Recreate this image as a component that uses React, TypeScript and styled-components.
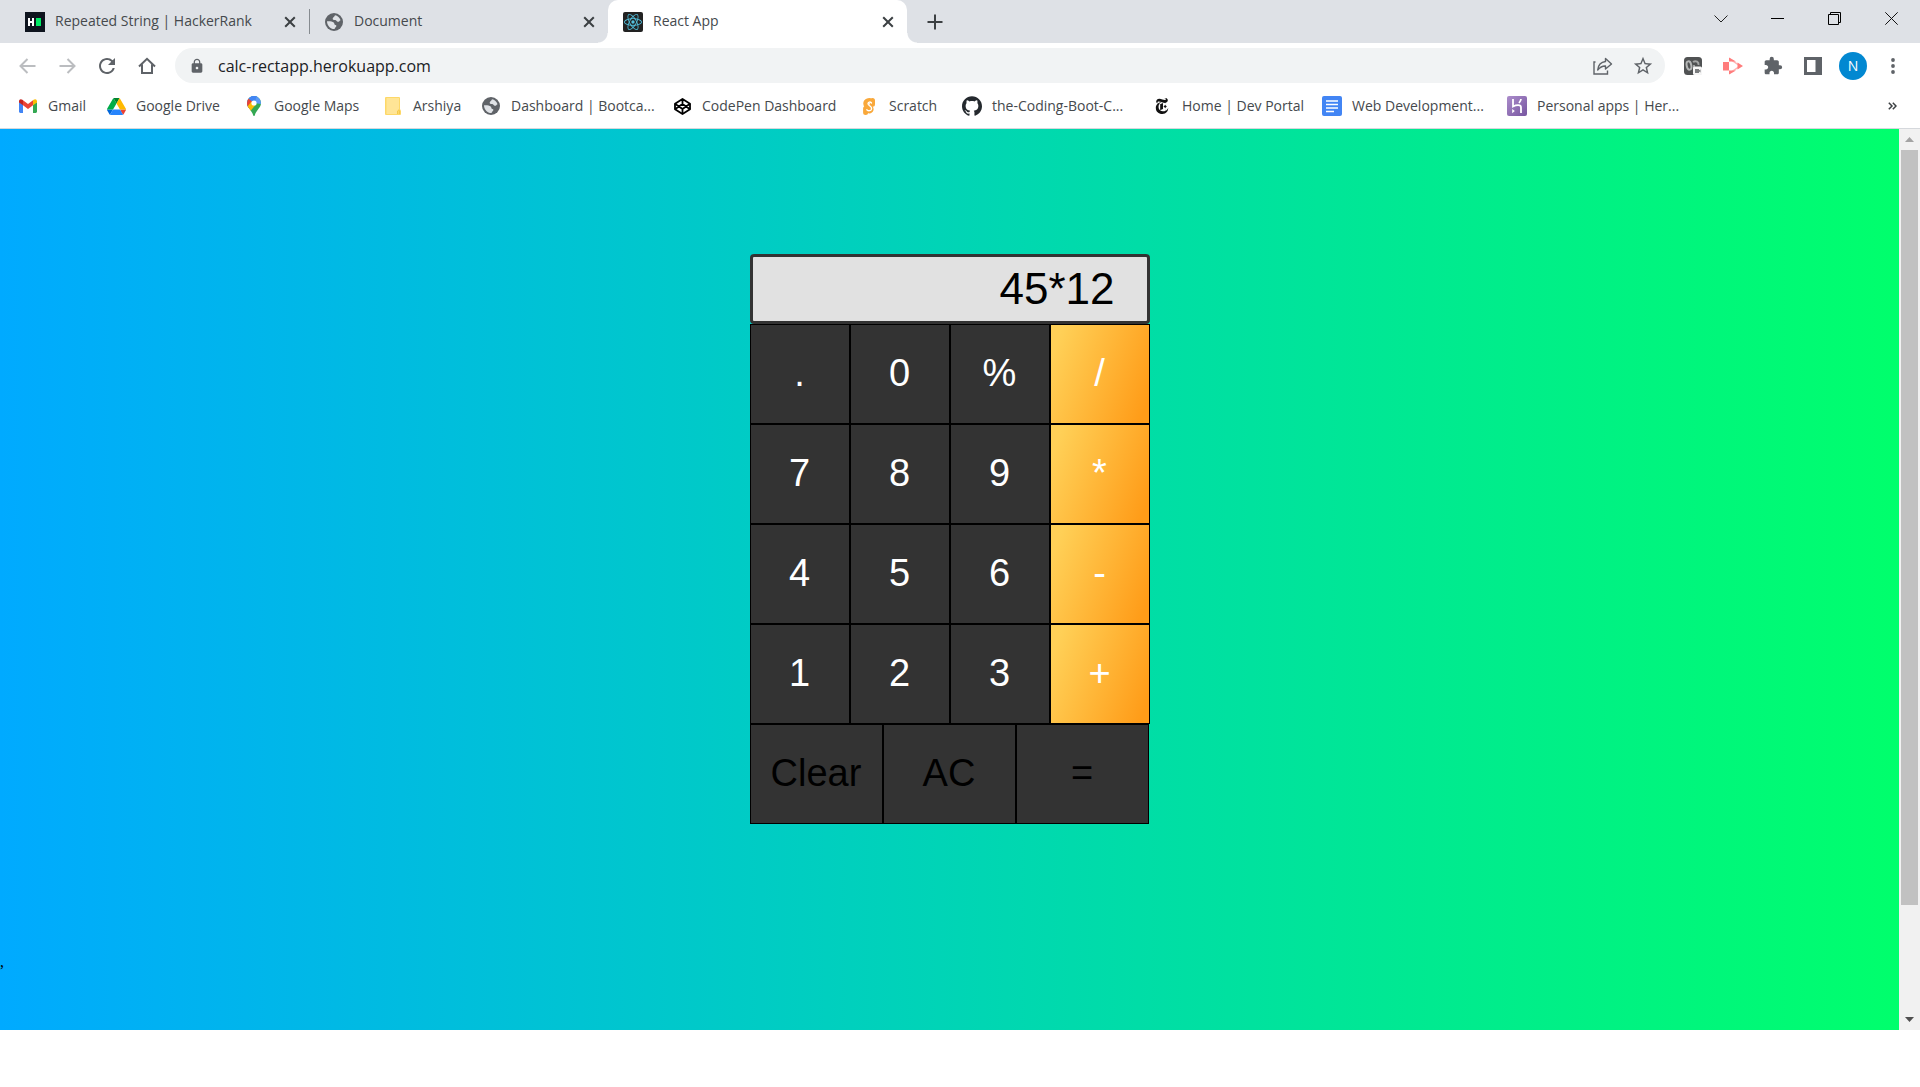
import React, { useState } from "react";
import styled, { createGlobalStyle, css } from "styled-components";
import { MdExtension, MdLock, MdStarBorder, MdRefresh } from "react-icons/md";
import { SiGithub, SiNewyorktimes, SiReact } from "react-icons/si";

const UI_FONT = '"Open Sans", "Noto Sans", sans-serif';
const KEY_FONT = '"Liberation Sans", Arial, sans-serif';

const GlobalStyle = createGlobalStyle`
  *, *::before, *::after { box-sizing: border-box; }
  body { margin: 0; background: #fff; font-family: ${UI_FONT}; }
  button { margin: 0; padding: 0; border: 0; background: none; font: inherit; color: inherit; }
  a { color: inherit; text-decoration: none; }
  svg { display: block; flex: none; }
`;

const Window = styled.div`
  display: flex;
  flex-direction: column;
  min-height: 100vh;
  padding-bottom: 57px;
`;

/* ---------- tab strip ---------- */

const TabStrip = styled.header`
  display: flex;
  height: 43px;
  padding-left: 10px;
  background: #dee1e6;
`;

const Tab = styled.div<{ $active?: boolean; $divider?: boolean }>`
  position: relative;
  display: flex;
  align-items: center;
  gap: 10px;
  flex: 0 1 299px;
  min-width: 0;
  padding: 0 9px 0 15px;
  font-size: 14px;
  line-height: 20px;
  color: #45494d;
  ${(p) =>
    p.$divider &&
    css`
      &::after {
        content: "";
        position: absolute;
        right: -1px;
        top: 9px;
        width: 1px;
        height: 25px;
        background: #868b90;
      }
    `}
  ${(p) =>
    p.$active &&
    css`
      background: #fff;
      border-radius: 10px 10px 0 0;
      &::before,
      &::after {
        content: "";
        position: absolute;
        bottom: 0;
        width: 10px;
        height: 10px;
      }
      &::before {
        left: -10px;
        background: radial-gradient(circle at 0 0, transparent 9px, #fff 10px);
      }
      &::after {
        right: -10px;
        background: radial-gradient(circle at 100% 0, transparent 9px, #fff 10px);
      }
    `}
`;

const TabTitle = styled.span`
  flex: 1;
  padding-bottom: 2px;
  overflow: hidden;
  white-space: nowrap;
`;

const IconSlot = styled.span`
  display: grid;
  place-items: center;
  flex: none;
  width: 20px;
  height: 20px;
`;

const CloseButton = styled.button`
  display: grid;
  place-items: center;
  width: 20px;
  height: 20px;
`;

const NewTabButton = styled.button`
  display: grid;
  place-items: center;
  align-self: center;
  width: 28px;
  height: 28px;
  margin-left: 14px;
`;

const WindowControls = styled.div`
  display: flex;
  margin-left: auto;
`;

const WindowButton = styled.button`
  display: grid;
  place-items: center;
  width: 57px;
  height: 37px;
`;

/* ---------- toolbar ---------- */

const Toolbar = styled.nav`
  display: flex;
  align-items: center;
  height: 45px;
  padding: 0 7px;
  color: #5f6368;
`;

const ToolButton = styled.button`
  display: grid;
  place-items: center;
  flex: none;
  width: 40px;
  height: 32px;
`;

const Omnibox = styled.div`
  display: flex;
  align-items: center;
  flex: 1;
  height: 35px;
  margin: 0 8px;
  padding: 0 2px 0 12px;
  border-radius: 18px;
  background: #f1f3f4;
`;

const Address = styled.input`
  flex: 1;
  min-width: 0;
  margin-left: 11px;
  padding: 0;
  border: 0;
  outline: 0;
  background: none;
  font: 16px/24px ${UI_FONT};
  color: #202124;
`;

const Avatar = styled.span`
  display: grid;
  place-items: center;
  width: 28px;
  height: 28px;
  border-radius: 50%;
  background: #0288d1;
  color: #fff;
  font-size: 14px;
  line-height: 20px;
`;

/* ---------- bookmarks ---------- */

const BookmarkBar = styled.nav`
  display: grid;
  grid-template-columns: 88px 138px 139px 98px 191px 187px 103px 190px 170px 185px 170px 1fr;
  align-items: center;
  height: 41px;
  padding: 0 18px 4px;
  border-bottom: 1px solid #d5d8dc;
  font-size: 14px;
  line-height: 20px;
  color: #45494d;
`;

const Bookmark = styled.a`
  display: flex;
  align-items: center;
  gap: 10px;
  white-space: nowrap;
`;

const MoreButton = styled.button`
  display: grid;
  place-items: center;
  justify-self: end;
  width: 20px;
  height: 20px;
`;

/* ---------- page and scrollbar ---------- */

const Viewport = styled.div`
  display: flex;
  flex: 1;
`;

const Page = styled.main`
  flex: 1;
  padding-top: 125px;
  background: linear-gradient(to right, #00aaff, #00ff6c);
`;

const Calculator = styled.section`
  width: 400px;
  margin: 0 auto;
  font-family: ${KEY_FONT};
`;

const Display = styled.input`
  display: block;
  width: 100%;
  height: 70px;
  padding: 0 32px;
  border: 3px solid #333;
  border-radius: 4px;
  outline: 0;
  background: #e1e1e1;
  color: #000;
  font: 44px/52px ${KEY_FONT};
  text-align: right;
`;

const Keys = styled.div`
  display: grid;
  grid-template-columns: repeat(4, 100px);
  grid-auto-rows: 100px;
`;

const ActionKeys = styled.div`
  display: grid;
  grid-template-columns: repeat(3, 133px);
  grid-auto-rows: 100px;
`;

const Key = styled.button<{ $kind: "digit" | "operator" | "action" }>`
  && {
    padding-bottom: 2px;
    border: 1px solid #000;
    font-size: 38px;
    line-height: 44px;
    color: ${(p) => (p.$kind === "action" ? "#000" : "#fff")};
    background: ${(p) =>
      p.$kind === "operator" ? "linear-gradient(110deg, #ffd057 9%, #ff9c18 93%)" : "#333"};
  }
`;

const Remark = styled.p`
  margin: 129px 0 0;
  font: 16px/18px "Liberation Serif", serif;
  color: #000;
`;

const Scrollbar = styled.div`
  display: flex;
  flex-direction: column;
  width: 21px;
  padding: 0 2px;
  background: #f1f1f1;
`;

const ScrollArrow = styled.button`
  display: grid;
  place-items: center;
  height: 21px;
`;

const Thumb = styled.div`
  flex: 755;
  background: #c1c1c1;
`;

const Track = styled.div`
  flex: 104;
`;

/* ---------- drawings ---------- */

const Cross = () => (
  <svg width="12" height="12" viewBox="0 0 12 12" stroke="#3c4043" strokeWidth="2">
    <path d="M1.2 1.2l9.6 9.6M10.8 1.2L1.2 10.8" />
  </svg>
);

const HackerRankIcon = () => (
  <svg width="20" height="20" viewBox="0 0 20 20">
    <rect width="20" height="20" fill="#0e141e" />
    <path d="M3 6h2v3h2V6h2v8H7v-3H5v3H3z" fill="#fff" />
    <rect x="11" y="6" width="5" height="8" fill="#00ea64" />
  </svg>
);

const GlobeIcon = () => (
  <svg width="18" height="18" viewBox="0 0 18 18">
    <circle cx="9" cy="9" r="9" fill="#5f6368" />
    <path
      d="M10 2.200c2.600.4 4.800 2.400 5.600 5-1 .2-1.500 1.800-3 1.600-1.300-.2-1-1.600-2.500-1.700C8.600 7 7.500 6.700 7.700 5.400 7.900 4.200 9.600 4 10 2.200z"
      fill="#dfe2e6"
    />
    <path
      d="M2 8.200c2.300-.2 5.500 0 6.700 1.300 1 1 .3 2.300 1.800 2.500 1 .2 1.200 1.200.4 1.900-.8.600-1.300 1.200-1.200 2.100C5.500 16.200 2 12.500 2 8.200z"
      fill="#dfe2e6"
    />
  </svg>
);

const CodePenIcon = () => (
  <svg width="17" height="17" viewBox="0 0 17 17" fill="none" stroke="#000" strokeWidth="1.800" strokeLinejoin="round">
    <path d="M8.500 1L16 5.800v5.400L8.500 16 1 11.200V5.800z" />
    <path d="M8.500 1v5M8.500 11v5M1 5.800l7.500 5.200L16 5.800M1 11.200L8.500 6l7.500 5.200" />
  </svg>
);

const ScratchIcon = () => (
  <svg width="12" height="17" viewBox="0 0 12 17" fill="none" strokeLinecap="round" strokeLinejoin="round">
    <path
      d="M8.500 3.300C6 1.800 3 2.800 2.800 5.300c-.2 2.300 1.500 3 3.200 3.800 1.500.7 2.400 1.300 2 2.700-.5 1.500-2.700 1.500-4.300 0M9.500 2.500v3.700M2.600 10.500v4"
      stroke="#f9a83a"
      strokeWidth="5"
    />
    <path
      d="M8.500 5C7.500 3.700 5.300 3.600 5 5.300c-.2 1.500 1 2 2 2.700 1.300.9 2 2 1.400 3.500-.7 1.600-3.200 1.600-4.600.2"
      stroke="#fff"
      strokeWidth="1.300"
    />
  </svg>
);

const ReactFavicon = styled.span`
  display: grid;
  place-items: center;
  width: 20px;
  height: 20px;
  border-radius: 2px;
  background: #222;
  color: #53c1de;
`;

const GmailIcon = () => (
  <svg width="18" height="14" viewBox="0 0 18 14">
    <path d="M0 3v9.600Q0 14 1.300 14H4V5.500z" fill="#4285f4" />
    <path d="M18 3v9.600Q18 14 16.700 14H14V5.500z" fill="#34a853" />
    <path d="M4 1.300l5 3.700 5-3.700v5L9 10 4 6.300z" fill="#ea4335" />
    <path d="M0 2.200C0 .2 2 -.5 3.400 .8L4 1.300v5L0 3.400z" fill="#c5221f" />
    <path d="M18 2.200C18 .2 16 -.5 14.600 .8L14 1.300v5l4-2.900z" fill="#fbbc04" />
  </svg>
);

const DriveIcon = () => (
  <svg width="19" height="17" viewBox="0 0 87.300 78">
    <path d="M6.600 66.850l3.850 6.650c.8 1.400 1.950 2.500 3.300 3.300l13.750-23.800H0c0 1.550.4 3.100 1.200 4.500z" fill="#0066da" />
    <path d="M43.650 25L29.900 1.200c-1.350.8-2.500 1.900-3.300 3.300L1.200 48.500C.4 49.900 0 51.450 0 53h27.500z" fill="#00ac47" />
    <path d="M73.550 76.800c1.350-.8 2.500-1.900 3.300-3.300l1.600-2.750 7.650-13.250c.8-1.400 1.200-2.950 1.200-4.500H59.800l5.850 11.500z" fill="#ea4335" />
    <path d="M43.650 25L57.400 1.200C56.050.4 54.500 0 52.900 0H34.400c-1.600 0-3.150.45-4.500 1.200z" fill="#00832d" />
    <path d="M59.800 53H27.500L13.750 76.800c1.350.8 2.900 1.200 4.500 1.200h50.800c1.600 0 3.150-.45 4.500-1.200z" fill="#2684fc" />
    <path d="M73.400 26.500L60.700 4.500c-.8-1.400-1.950-2.500-3.300-3.300L43.650 25 59.800 53h27.450c0-1.550-.4-3.100-1.200-4.500z" fill="#ffba00" />
  </svg>
);

const MapsIcon = () => (
  <svg width="14" height="20" viewBox="0 0 14 20">
    <clipPath id="pin">
      <path d="M7 0a7 7 0 0 1 7 7c0 5-4.500 6.500-6.200 12.300Q7 21 6.200 19.300C4.500 13.500 0 12 0 7a7 7 0 0 1 7-7z" />
    </clipPath>
    <g clipPath="url(#pin)">
      <rect width="14" height="20" fill="#34a853" />
      <path d="M0 12.500L14 -3H0z" fill="#4285f4" />
      <path d="M0 1.500L7 7 0 15z" fill="#ea4335" />
      <path d="M0 11L4.500 5.500 9.500 8 2.500 16z" fill="#fbbc04" />
      <path d="M3 0h8.500L7 5.500 1.500 2z" fill="#4285f4" />
      <path d="M10 0l4 4v4L7 7z" fill="#5a98f8" />
    </g>
    <circle cx="7" cy="7" r="2.600" fill="#fff" />
  </svg>
);

const FolderIcon = () => (
  <svg width="16" height="18" viewBox="0 0 16 18">
    <path d="M1 0h13q1 0 1 1v11l1 2v3q0 1-1 1H1q-1 0-1-1V1q0-1 1-1z" fill="#fdd868" />
    <path d="M1.500 1H14v11l-1.500 2v3h-11z" fill="#ffe596" />
    <path d="M12.500 17v-3q1.500-2 2 0v3" fill="none" stroke="#f4c94b" />
  </svg>
);

const DocsIcon = () => (
  <svg width="20" height="20" viewBox="0 0 20 20">
    <rect width="20" height="20" rx="2" fill="#4285f4" />
    <path d="M4 5h12M4 8.500h12M4 12h12M4 15.500h8" stroke="#fff" strokeWidth="1.700" />
  </svg>
);

const HerokuIcon = () => (
  <svg width="20" height="20" viewBox="0 0 20 20">
    <defs>
      <linearGradient id="heroku" x1="0" y1="0" x2="1" y2="1">
        <stop offset="0" stopColor="#ab8ccb" />
        <stop offset="1" stopColor="#7756a0" />
      </linearGradient>
    </defs>
    <rect width="20" height="20" rx="2" fill="url(#heroku)" />
    <path d="M6 3v7.500c3-1.500 8-2.400 8 1V17M14 3q-.3 2.200-2 4" fill="none" stroke="#fff" strokeWidth="1.800" />
    <path d="M5.200 13l2.600 2-2.600 2.200z" fill="#fff" />
  </svg>
);

const Arrow = ({ back }: { back?: boolean }) => (
  <svg width="17" height="16" viewBox="0 0 17 16" fill="none" stroke="#bbbdc0" strokeWidth="2">
    <path d={back ? "M16.500 8H1.500M8.500 1L1.500 8l7 7" : "M.5 8h15M8.500 1l7 7-7 7"} />
  </svg>
);

const HomeIcon = () => (
  <svg width="18" height="18" viewBox="0 0 18 18" fill="none" stroke="#5f6368" strokeWidth="2">
    <path d="M1 9.500L9 1.800l8 7.700M4 7.500V16h10V7.500" />
  </svg>
);

const ShareIcon = () => (
  <svg width="20" height="18" viewBox="0 0 20 18" fill="none" stroke="#5f6368" strokeWidth="1.400">
    <path d="M2.500 5H1v12h13.500v-3.500" />
    <path d="M12.500 1.500L18.500 7l-6 5V9C9 8.800 7 10.200 4.700 13 5.200 8.200 8 5 12.500 4.500z" strokeLinejoin="round" />
  </svg>
);

const RecorderIcon = () => (
  <svg width="18" height="18" viewBox="0 0 18 18">
    <rect width="18" height="18" rx="3.500" fill="#505253" />
    <ellipse cx="5" cy="8.500" rx="2.300" ry="4.200" fill="none" stroke="#b4b6b6" strokeWidth="2" transform="rotate(-12 5 8.500)" />
    <path d="M9 5c3-2 6 0 5.500 3M10 8v4" fill="none" stroke="#a2a4a4" strokeWidth="2" />
    <rect x="9" y="9.500" width="9" height="8.500" rx="1.500" fill="#f6f6f6" />
    <path d="M11 12h4v1.200l1.500-.8v3l-1.500-.8V16h-4z" fill="#7b7d7e" />
  </svg>
);

const ScreencastIcon = () => (
  <svg width="20" height="18" viewBox="0 0 20 18">
    <rect y="5" width="6" height="8.500" fill="#ff7c7c" />
    <path d="M7.500 4V2.500l9.500 6.500-9.500 6.500V14" fill="none" stroke="#ffb3b3" strokeWidth="1.500" />
    <path d="M6 .5L13 4.500H6zM6 17.500l7-4H6zM14.500 5.500L20 9l-5.500 3.500z" fill="#ff7c7c" />
  </svg>
);

const SidePanelIcon = () => (
  <svg width="18" height="18" viewBox="0 0 18 18">
    <path d="M0 0h18v18H0zM3 3v12h8.500V3z" fill="#5f6368" fillRule="evenodd" />
  </svg>
);

const DotsIcon = () => (
  <svg width="4" height="16" viewBox="0 0 4 16" fill="#5f6368">
    <circle cx="2" cy="2" r="1.900" />
    <circle cx="2" cy="8" r="1.900" />
    <circle cx="2" cy="14" r="1.900" />
  </svg>
);

const DoubleChevron = () => (
  <svg width="9" height="8" viewBox="0 0 9 8" fill="none" stroke="#3c4043" strokeWidth="1.500">
    <path d="M.8 .8L4 4 .8 7.200M4.800 .8L8 4 4.800 7.200" />
  </svg>
);

/* ---------- data ---------- */

const bookmarks: { label: string; icon: React.ReactNode }[] = [
  { label: "Gmail", icon: <GmailIcon /> },
  { label: "Google Drive", icon: <DriveIcon /> },
  { label: "Google Maps", icon: <MapsIcon /> },
  { label: "Arshiya", icon: <FolderIcon /> },
  { label: "Dashboard | Bootca...", icon: <GlobeIcon /> },
  { label: "CodePen Dashboard", icon: <CodePenIcon /> },
  { label: "Scratch", icon: <ScratchIcon /> },
  { label: "the-Coding-Boot-C...", icon: <SiGithub size={20} color="#24292e" /> },
  { label: "Home | Dev Portal", icon: <SiNewyorktimes size={16} color="#111" /> },
  { label: "Web Development...", icon: <DocsIcon /> },
  { label: "Personal apps | Her...", icon: <HerokuIcon /> },
];

const keys = [".", "0", "%", "/", "7", "8", "9", "*", "4", "5", "6", "-", "1", "2", "3", "+"];
const operators = ["/", "*", "-", "+"];

export default function App() {
  const [entry, setEntry] = useState("45*12");
  const [address, setAddress] = useState("calc-rectapp.herokuapp.com");

  return (
    <Window>
      <GlobalStyle />
      <TabStrip>
        <Tab $divider>
          <IconSlot><HackerRankIcon /></IconSlot>
          <TabTitle>Repeated String | HackerRank</TabTitle>
          <CloseButton aria-label="Close tab"><Cross /></CloseButton>
        </Tab>
        <Tab>
          <IconSlot><GlobeIcon /></IconSlot>
          <TabTitle>Document</TabTitle>
          <CloseButton aria-label="Close tab"><Cross /></CloseButton>
        </Tab>
        <Tab $active>
          <ReactFavicon><SiReact size={18} /></ReactFavicon>
          <TabTitle>React App</TabTitle>
          <CloseButton aria-label="Close tab"><Cross /></CloseButton>
        </Tab>
        <NewTabButton aria-label="New tab">
          <svg width="16" height="16" viewBox="0 0 16 16" stroke="#3c4043" strokeWidth="2">
            <path d="M8 .5v15M.5 8h15" />
          </svg>
        </NewTabButton>
        <WindowControls>
          <WindowButton aria-label="Search tabs">
            <svg width="14" height="8" viewBox="0 0 14 8" fill="none" stroke="#222"><path d="M.5 .5L7 7 13.500 .5" /></svg>
          </WindowButton>
          <WindowButton aria-label="Minimize">
            <svg width="13" height="1" viewBox="0 0 13 1"><rect width="13" height="1" /></svg>
          </WindowButton>
          <WindowButton aria-label="Restore">
            <svg width="13" height="13" viewBox="0 0 13 13" fill="none" stroke="#000">
              <path d="M.5 2.500h10v10H.5zM2.500 2.500v-2h10v10h-2" />
            </svg>
          </WindowButton>
          <WindowButton aria-label="Close">
            <svg width="13" height="13" viewBox="0 0 13 13" stroke="#111"><path d="M.3 .3l12.400 12.400M12.700 .3L.3 12.700" /></svg>
          </WindowButton>
        </WindowControls>
      </TabStrip>

      <Toolbar>
        <ToolButton aria-label="Back"><Arrow back /></ToolButton>
        <ToolButton aria-label="Forward"><Arrow /></ToolButton>
        <ToolButton aria-label="Reload"><MdRefresh size={24} /></ToolButton>
        <ToolButton aria-label="Home"><HomeIcon /></ToolButton>
        <Omnibox>
          <IconSlot><MdLock size={16} /></IconSlot>
          <Address aria-label="Address" value={address} onChange={(e) => setAddress(e.target.value)} />
          <ToolButton aria-label="Share"><ShareIcon /></ToolButton>
          <ToolButton aria-label="Bookmark this page"><MdStarBorder size={22} /></ToolButton>
        </Omnibox>
        <ToolButton aria-label="Recorder"><RecorderIcon /></ToolButton>
        <ToolButton aria-label="Screencast"><ScreencastIcon /></ToolButton>
        <ToolButton aria-label="Extensions"><MdExtension size={20} /></ToolButton>
        <ToolButton aria-label="Side panel"><SidePanelIcon /></ToolButton>
        <ToolButton aria-label="Profile"><Avatar>N</Avatar></ToolButton>
        <ToolButton aria-label="Menu"><DotsIcon /></ToolButton>
      </Toolbar>

      <BookmarkBar>
        {bookmarks.map((b) => (
          <Bookmark key={b.label} href="#">
            <IconSlot>{b.icon}</IconSlot>
            {b.label}
          </Bookmark>
        ))}
        <MoreButton aria-label="More bookmarks"><DoubleChevron /></MoreButton>
      </BookmarkBar>

      <Viewport>
        <Page>
          <Calculator>
            <Display aria-label="Result" value={entry} readOnly />
            <Keys>
              {keys.map((k) => (
                <Key
                  key={k}
                  $kind={operators.includes(k) ? "operator" : "digit"}
                  onClick={() => setEntry(entry + k)}
                >
                  {k}
                </Key>
              ))}
            </Keys>
            <ActionKeys>
              <Key $kind="action" onClick={() => setEntry(entry.slice(0, -1))}>Clear</Key>
              <Key $kind="action" onClick={() => setEntry("")}>AC</Key>
              <Key $kind="action">=</Key>
            </ActionKeys>
          </Calculator>
          <Remark>,</Remark>
        </Page>
        <Scrollbar>
          <ScrollArrow aria-label="Scroll up">
            <svg width="9" height="5" viewBox="0 0 9 5" fill="#a3a3a3"><path d="M4.500 0L9 5H0z" /></svg>
          </ScrollArrow>
          <Thumb />
          <Track />
          <ScrollArrow aria-label="Scroll down">
            <svg width="9" height="5" viewBox="0 0 9 5" fill="#505050"><path d="M4.500 5L0 0h9z" /></svg>
          </ScrollArrow>
        </Scrollbar>
      </Viewport>
    </Window>
  );
}
